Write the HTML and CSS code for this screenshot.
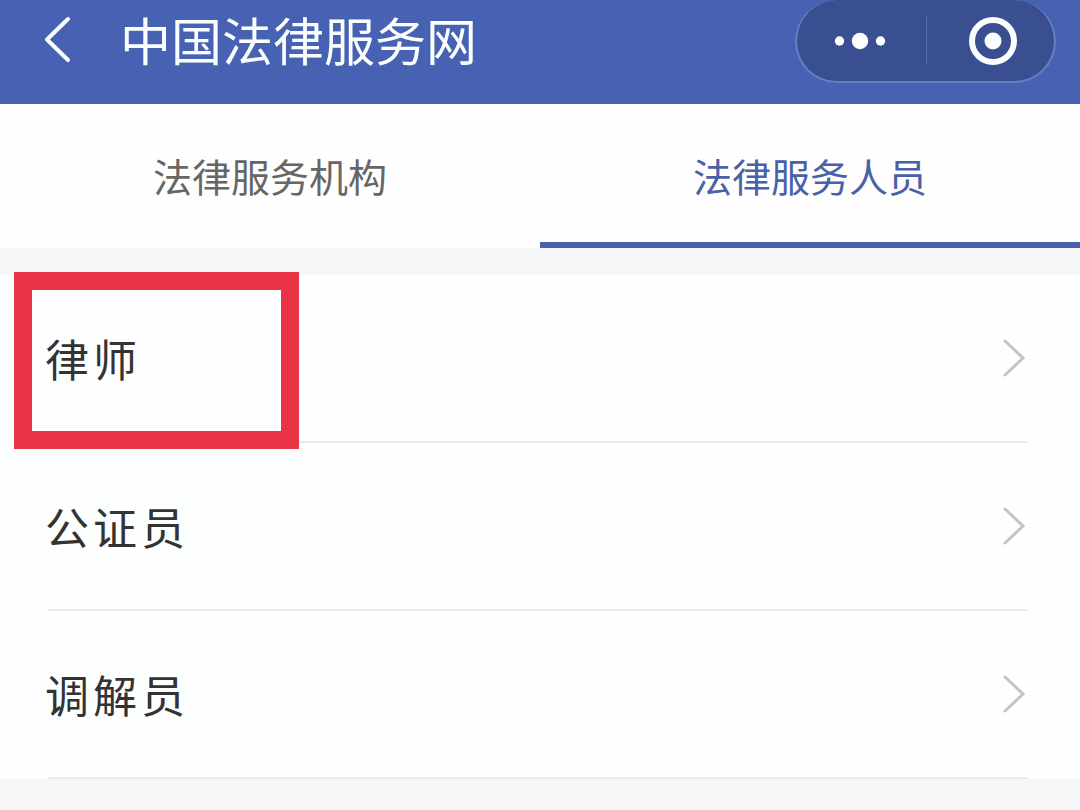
FILE: index.html
```html
<!DOCTYPE html>
<html lang="zh-CN">
<head>
	<meta charset="utf-8">
	<meta name="viewport" content="width=device-width, initial-scale=1">
	<title>中国法律服务网</title>
	<link rel="stylesheet" href="styles.css">
</head>
<body>
	<header class="navbar">
		<button class="back" type="button" aria-label="返回">
			<svg width="28" height="48" viewBox="0 0 28 48" fill="none" stroke="currentColor" stroke-width="4" stroke-linecap="round" stroke-linejoin="round"><path d="M24 3L3 23.500L24 44"/></svg>
		</button>
		<h1 class="title">中国法律服务网</h1>
		<div class="capsule">
			<button class="capsule-btn" type="button" aria-label="更多">
				<svg width="52" height="18" viewBox="0 0 52 18" fill="currentColor"><circle cx="5.500" cy="9" r="4.700"/><circle cx="26" cy="9" r="8.200"/><circle cx="46.500" cy="9" r="4.700"/></svg>
			</button>
			<button class="capsule-btn capsule-close" type="button" aria-label="关闭">
				<svg width="50" height="50" viewBox="0 0 50 50"><circle cx="25" cy="25" r="21" fill="none" stroke="currentColor" stroke-width="6"/><circle cx="25" cy="25" r="8.500" fill="currentColor"/></svg>
			</button>
		</div>
	</header>
	<nav class="tabs">
		<a class="tab" href="#org">法律服务机构</a>
		<a class="tab active" href="#staff">法律服务人员</a>
	</nav>
	<main class="list" id="staff">
		<a class="row marked" href="#lawyer">
			<span class="name">律师</span>
			<svg class="arrow" width="24" height="40" viewBox="0 0 24 40"><path d="M3 3L21 20L3 37"/></svg>
		</a>
		<a class="row" href="#notary">
			<span class="name">公证员</span>
			<svg class="arrow" width="24" height="40" viewBox="0 0 24 40"><path d="M3 3L21 20L3 37"/></svg>
		</a>
		<a class="row" href="#mediator">
			<span class="name">调解员</span>
			<svg class="arrow" width="24" height="40" viewBox="0 0 24 40"><path d="M3 3L21 20L3 37"/></svg>
		</a>
	</main>
</body>
</html>
```
FILE: styles.css
```css
*, *::before {
	box-sizing: border-box;
}
body {
	margin: 0;
	background: #f5f6f8;
	font-family: "Noto Sans CJK SC", sans-serif;
}
a {
	text-decoration: none;
}
button {
	padding: 0;
	border: 0;
	background: none;
	color: inherit;
}
svg {
	display: block;
}

.navbar {
	display: flex;
	align-items: flex-start;
	height: 104px;
	padding: 0 24px 0 44px;
	background: #4762b3;
	color: #fafeff;
}
.back {
	padding-top: 16px;
}
.title {
	flex: 1;
	margin: 0 0 0 48px;
	font-size: 51px;
	font-weight: 400;
	line-height: 78px;
}
.capsule {
	display: flex;
	width: 261px;
	height: 83px;
	border: 2px solid #657fc4;
	border-top: 0;
	border-radius: 42px;
	background: #3a4f8f;
}
.capsule-btn {
	display: flex;
	width: 50%;
	align-items: center;
	justify-content: center;
	padding-right: 2px;
}
.capsule-close {
	position: relative;
	padding: 0 0 0 6px;
}
.capsule-close::before {
	content: "";
	position: absolute;
	left: 0;
	top: 16px;
	width: 1px;
	height: 48px;
	background: #5870b0;
}

.tabs {
	display: flex;
	background: #fefefe;
}
.tab {
	flex: 1;
	height: 144px;
	border-bottom: 6px solid transparent;
	color: #666;
	font-size: 39px;
	line-height: 142px;
	text-align: center;
}
.active {
	border-color: #4861a9;
	color: #4861a9;
}

.list {
	margin-top: 27px;
	padding: 0 52px 0 48px;
	background: #fdfefe;
}
.row {
	position: relative;
	display: flex;
	align-items: center;
	justify-content: space-between;
	height: 168px;
	border-bottom: 2px solid #ebecec;
	color: #333;
	font-size: 44px;
	letter-spacing: 4px;
}
.name {
	z-index: 1;
	margin-left: -3px;
}
.arrow {
	margin-right: 2px;
	fill: none;
	stroke: #c4c4c4;
	stroke-width: 3;
	stroke-linecap: round;
}

/* red frame round the entry to tap */
.marked::before {
	content: "";
	position: absolute;
	left: -34px;
	top: -3px;
	width: 285px;
	height: 177px;
	border: 18px solid #e93445;
	background: #fefefe;
}
```
